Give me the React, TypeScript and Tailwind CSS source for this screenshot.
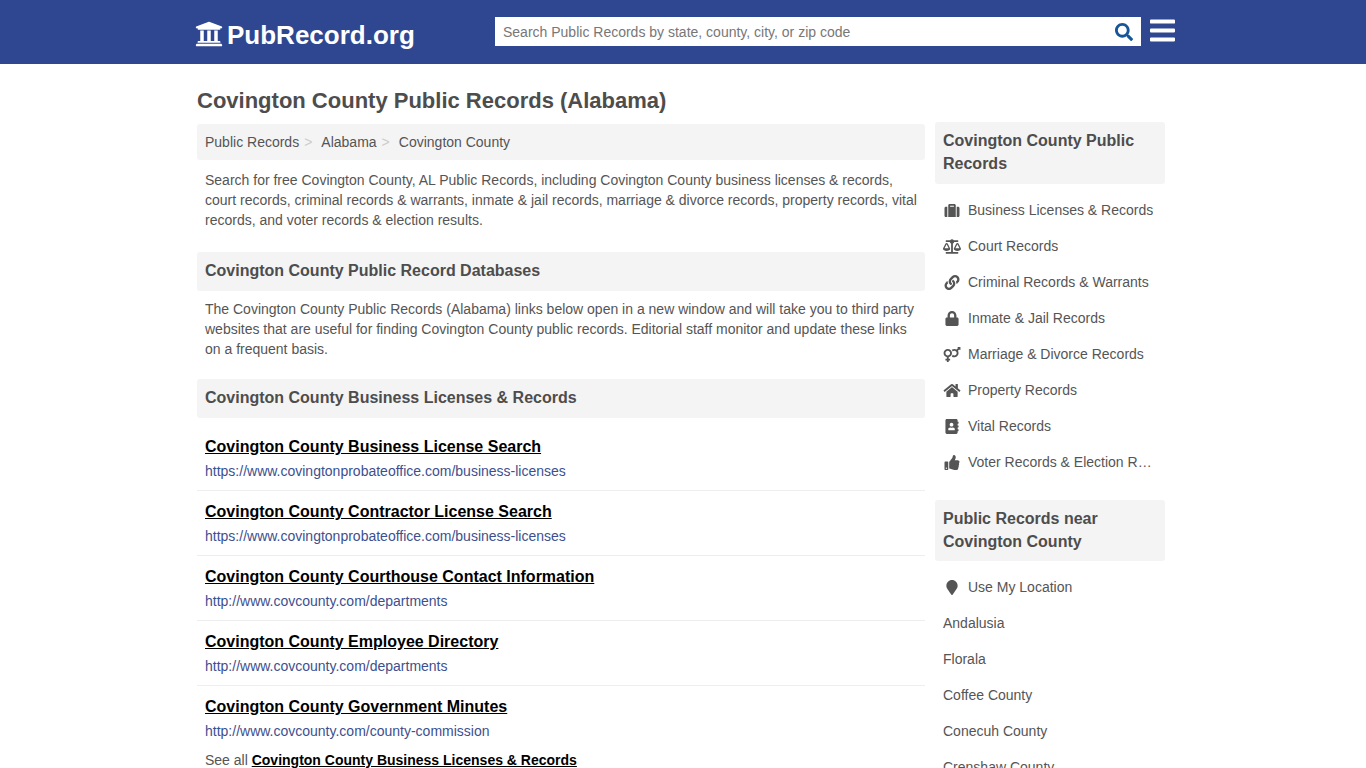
import {
  FaUniversity,
  FaSearch,
  FaBars,
  FaSuitcase,
  FaBalanceScale,
  FaLink,
  FaLock,
  FaVenusMars,
  FaHome,
  FaAddressBook,
  FaThumbsUp,
  FaMapMarker,
} from "react-icons/fa";

const links = [
  { title: "Covington County Business License Search", url: "https://www.covingtonprobateoffice.com/business-licenses" },
  { title: "Covington County Contractor License Search", url: "https://www.covingtonprobateoffice.com/business-licenses" },
  { title: "Covington County Courthouse Contact Information", url: "http://www.covcounty.com/departments" },
  { title: "Covington County Employee Directory", url: "http://www.covcounty.com/departments" },
  { title: "Covington County Government Minutes", url: "http://www.covcounty.com/county-commission" },
];

const categories = [
  { label: "Business Licenses & Records", icon: FaSuitcase },
  { label: "Court Records", icon: FaBalanceScale },
  { label: "Criminal Records & Warrants", icon: FaLink },
  { label: "Inmate & Jail Records", icon: FaLock },
  { label: "Marriage & Divorce Records", icon: FaVenusMars },
  { label: "Property Records", icon: FaHome },
  { label: "Vital Records", icon: FaAddressBook },
  { label: "Voter Records & Election Results", icon: FaThumbsUp },
];

const nearby = ["Andalusia", "Florala", "Coffee County", "Conecuh County", "Crenshaw County"];

function SectionHeading({ text }: { text: string }) {
  return (
    <h2 className="flex h-[39px] items-center rounded-[3px] bg-[#f4f4f4] px-2 pb-[2px] text-base font-bold text-[#4d4d4d]">
      {text}
    </h2>
  );
}

function SideHeading({ text, height }: { text: string; height: string }) {
  return (
    <h3 className={`${height} rounded-[3px] bg-[#f4f4f4] px-2 pt-[7px] text-base leading-[23px] font-bold text-[#4d4d4d]`}>
      {text}
    </h3>
  );
}

export default function App() {
  return (
    <div className="h-[768px] overflow-hidden bg-white font-['Liberation_Sans',Arial,sans-serif] text-sm text-[#555]">
      <header className="h-16 bg-[#2e4790]">
        <div className="mx-auto flex w-[980px] items-start pl-[2px]">
          <a className="mt-[17px] flex w-[300px] shrink-0 items-center text-[26px] leading-9 font-bold text-white">
            <FaUniversity className="mr-[4px] mb-[3px] h-[28px] w-[28px]" />
            PubRecord.org
          </a>
          <div className="mt-[17px] flex h-[29px] w-[646px] shrink-0 items-center justify-between bg-white pr-2 pl-2">
            <span className="text-sm text-[#777]">Search Public Records by state, county, city, or zip code</span>
            <FaSearch className="h-[18px] w-[18px] text-[#14569b]" />
          </div>
          <FaBars className="mt-[16px] ml-[9px] h-[29px] w-[25px] shrink-0 text-white" />
        </div>
      </header>

      <div className="mx-auto flex w-[972px] items-start gap-[10px]">
        <main className="w-[728px] shrink-0">
          <h1 className="mt-[23px] text-[22px] leading-[27px] font-bold text-[#4d4d4d]">
            Covington County Public Records (Alabama)
          </h1>
          <nav className="mt-[10px] flex h-9 items-center rounded-[3px] bg-[#f4f4f4] px-2 text-[#555]">
            <span>Public Records</span>
            <span className="mr-[9px] ml-[5px] text-[#ccc]">&gt;</span>
            <span>Alabama</span>
            <span className="mr-[9px] ml-[5px] text-[#ccc]">&gt;</span>
            <span>Covington County</span>
          </nav>
          <p className="mt-[10px] px-2 leading-5">
            Search for free Covington County, AL Public Records, including Covington County business licenses &amp;
            records, court records, criminal records &amp; warrants, inmate &amp; jail records, marriage &amp; divorce
            records, property records, vital records, and voter records &amp; election results.
          </p>
          <div className="mt-[22px]">
            <SectionHeading text="Covington County Public Record Databases" />
          </div>
          <p className="mt-2 px-2 leading-5">
            The Covington County Public Records (Alabama) links below open in a new window and will take you to third
            party websites that are useful for finding Covington County public records. Editorial staff monitor and
            update these links on a frequent basis.
          </p>
          <div className="mt-5">
            <SectionHeading text="Covington County Business Licenses & Records" />
          </div>
          <ul className="mt-[8px]">
            {links.map((link, i) => (
              <li
                key={link.title}
                className={`h-[65px] px-2 pt-[11px] ${i < links.length - 1 ? "border-b border-[#eee]" : ""}`}
              >
                <a className="block text-base leading-[20px] font-bold text-black underline">{link.title}</a>
                <a className="mt-[4px] block leading-5 text-[#3d4f8f]">{link.url}</a>
              </li>
            ))}
          </ul>
          <p className="-mt-[1px] px-2 leading-5">
            See all <a className="font-bold text-black underline">Covington County Business Licenses &amp; Records</a>
          </p>
        </main>

        <aside className="w-[230px] shrink-0 pt-[58px]">
          <SideHeading text="Covington County Public Records" height="h-[62px]" />
          <ul className="mt-2 mb-[20px]">
            {categories.map(({ label, icon: Icon }) => (
              <li key={label} className="flex h-9 items-center pr-2 pl-2">
                <span className="flex w-[25px] shrink-0 items-center">
                  <Icon className="h-[15px] w-[18px] text-[#555]" />
                </span>
                <span className="truncate">{label}</span>
              </li>
            ))}
          </ul>
          <SideHeading text="Public Records near Covington County" height="h-[61px]" />
          <ul className="mt-2">
            <li className="flex h-9 items-center px-2">
              <span className="flex w-[25px] shrink-0 items-center pl-[3px]">
                <FaMapMarker className="h-[15px] w-[12px] text-[#555]" />
              </span>
              <span>Use My Location</span>
            </li>
            {nearby.map((name) => (
              <li key={name} className="flex h-9 items-center px-2">
                {name}
              </li>
            ))}
          </ul>
        </aside>
      </div>
    </div>
  );
}
